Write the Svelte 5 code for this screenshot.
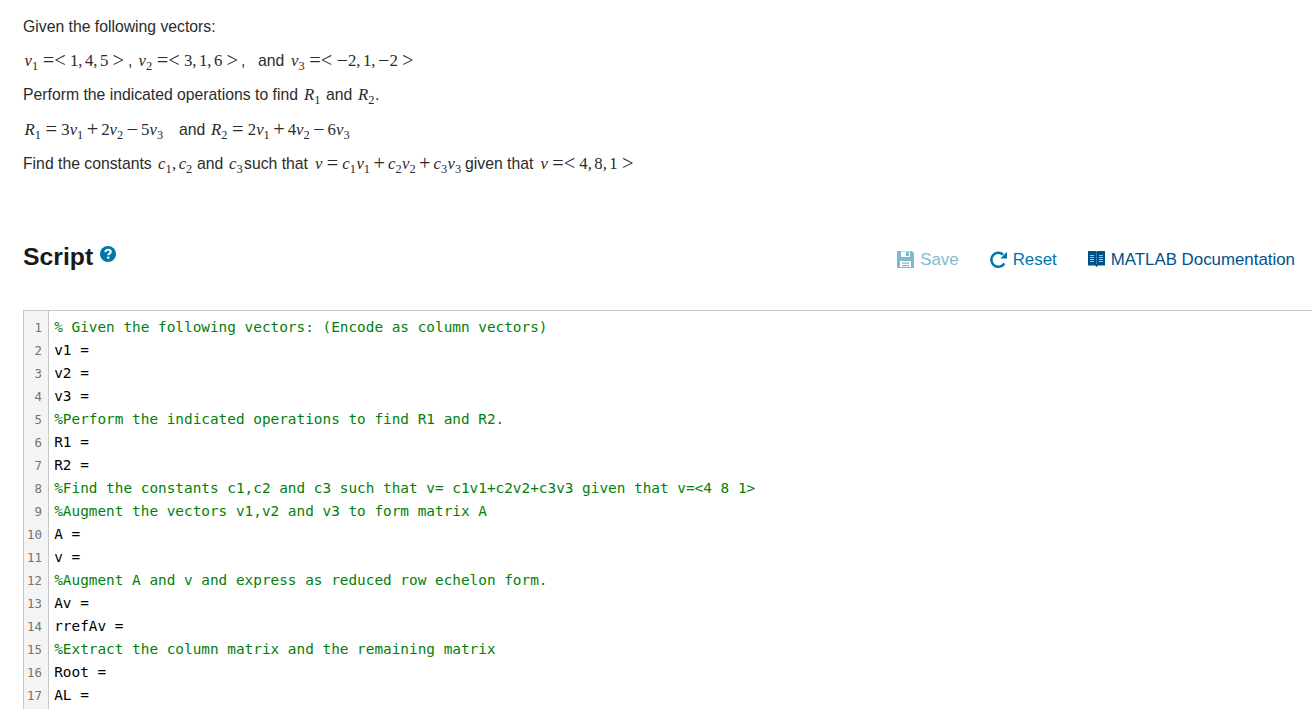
<script>
// each part: start of the part, kind, text
const rows=[
	[[23,"text","Given the following vectors:"]],
	[
		[24.5,"math","v_1=<1,4,5>"],[128,"text",","],
		[138.5,"math","v_2=<3,1,6>"],[241,"text",","],
		[258,"text","and"],[291,"math","v_3=<~2,1,~2>"]
	],
	[
		[23,"text","Perform the indicated operations to find"],[304,"math","R_1"],
		[326,"text","and"],[358,"math","R_2"],[375,"text","."]
	],
	[
		[24.5,"math","R_1=3v_1+2v_2−5v_3"],[179,"text","and"],
		[211,"math","R_2=2v_1+4v_2−6v_3"]
	],
	[
		[23,"text","Find the constants"],[158,"math","c_1,c_2"],
		[197,"text","and"],[229,"math","c_3"],[244,"text","such that"],
		[315,"math","v=c_1v_1+c_2v_2+c_3v_3"],[465,"text","given that"],
		[540.5,"math","v=<4,8,1>"]
	]
]

const lines=[
	"% Given the following vectors: (Encode as column vectors)",
	"v1 =",
	"v2 =",
	"v3 =",
	"%Perform the indicated operations to find R1 and R2.",
	"R1 =",
	"R2 =",
	"%Find the constants c1,c2 and c3 such that v= c1v1+c2v2+c3v3 given that v=<4 8 1>",
	"%Augment the vectors v1,v2 and v3 to form matrix A",
	"A =",
	"v =",
	"%Augment A and v and express as reduced row echelon form.",
	"Av =",
	"rrefAv =",
	"%Extract the column matrix and the remaining matrix",
	"Root =",
	"AL ="
]

function tokens(source){
	return source.match(/_\d|=<|[a-zA-Z]|\d|./g).map(t=>{
		if(t[0]==="_") return { kind:"sub", text:t[1] }
		if(/[a-zA-Z]/.test(t)) return { kind:"var", text:t }
		if(t==="+"||t==="−") return { kind:"bin", text:t }
		if(t==="~") return { kind:"neg", text:"−" }
		if(t===",") return { kind:"comma", text:t }
		if(/\d/.test(t)) return { kind:"num", text:t }
		return { kind:"rel", text:t }
	})
}

function width(row,i){
	return i+1<row.length ? (row[i+1][0]-row[i][0])+"px" : "auto"
}
</script>

<main>
	<section class="problem">
		{#each rows as row}
		<p style:padding-left="{row[0][0]}px">
			{#each row as [x,kind,text], i}
			<span class="part" style:width={width(row,i)}>
				{#if kind==="math"}
				<span class="math">{#each tokens(text) as t}<span class={t.kind}>{t.text}</span>{/each}</span>
				{:else}{text}{/if}
			</span>
			{/each}
		</p>
		{/each}
	</section>

	<header>
		<h2>Script</h2>
		<svg class="help" viewBox="0 0 16 16">
			<circle cx="8" cy="8" r="8" />
			<path d="M5.400 6.100C5.500 4.500 6.600 3.800 8.100 3.800c1.500 0 2.600.8 2.600 2.100 0 1.900-2.400 1.700-2.400 3.400" />
			<rect x="7.1" y="10.6" width="2.3" height="2.1" />
		</svg>
		<nav>
			<a class="save" href="#save">
				<svg viewBox="0 0 17 17">
					<path fill="currentColor" fill-rule="evenodd" d="M0 0h15L17 2v15H0zM4 0v6h9V0zM3 10v6h11v-6z" />
					<path fill="currentColor" d="M4 0h9v.6H4zM9 1h3v4H9zM5 11.500h7v1.200H5zM5 14h7v1.200H5z" />
				</svg>
				Save
			</a>
			<a class="reset" href="#reset">
				<svg viewBox="0 0 17 17">
					<path fill="none" stroke="currentColor" stroke-width="2.5" d="M14.300 12.500A7 7 0 1 1 13.200 3.700" />
					<path fill="currentColor" d="M17 .8v6.700h-6.700z" />
				</svg>
				Reset
			</a>
			<a class="docs" href="#docs">
				<svg viewBox="0 0 17 17">
					<path fill="currentColor" d="M0 0h7.500L8.500.8 9.500 0H17v14.500h-7L8.500 16 7 14.500H0z" />
					<path stroke="#fff" stroke-width="1" opacity=".65" d="M2 4.500h4M2 6.500h4M2 8.500h4M2 10.500h4M11 4.500h4M11 6.500h4M11 8.500h4M11 10.500h4" />
					<path stroke="#fff" stroke-width=".6" opacity=".4" d="M8.500 2v11" />
				</svg>
				MATLAB Documentation
			</a>
		</nav>
	</header>

	<div class="editor">
		{#each lines as line, i}
		<div class="line">
			<span class="number">{i+1}</span>
			<code class:comment={line[0]==="%"}>{line}</code>
		</div>
		{/each}
	</div>
</main>

<style>
	:global(body) {
		background: #fff;
		overflow: hidden;
	}

	main {
		height: 709px;
		overflow: hidden;
		font-family: "Liberation Sans", Arial, sans-serif;
		color: #2b2b2b;
	}

	.problem {
		box-sizing: border-box;
		height: 230px;
		padding-top: 10px;
		font-size: 15.75px;
	}

	p {
		display: flex;
		height: 34px;
		margin: 0;
		line-height: 34px;
		white-space: nowrap;
	}

	p:nth-child(4) { margin-top: 1px }

	.part { flex: none }

	.math {
		display: inline-block;
		font-family: "Liberation Serif", "Times New Roman", serif;
		font-size: 16.8px;
	}

	.var { font-style: italic }

	.sub {
		position: relative;
		top: 4px;
		margin-right: .4px;
		font-size: 12.4px;
		line-height: 0;
	}

	.rel, .bin, .neg {
		position: relative;
		top: 1px;
		font-size: 20.4px;
		line-height: 0;
	}

	.rel { margin: 0 4.2px }
	.bin { margin: 0 3px }
	.comma { margin-right: 2.4px }

	header {
		display: flex;
		box-sizing: border-box;
		height: 80px;
		padding: 0 17px 0 23px;
	}

	h2 {
		margin: 13px 7px 0 0;
		font-size: 24.75px;
		line-height: 28px;
		color: #1a1a1a;
	}

	.help {
		width: 16px;
		height: 16px;
		margin-top: 16px;
		fill: #0076a8;
	}

	.help path {
		fill: none;
		stroke: #fff;
		stroke-width: 2.1;
	}

	.help rect { fill: #fff }

	nav {
		display: flex;
		gap: 31px;
		margin: 20px 0 0 auto;
	}

	a {
		display: flex;
		gap: 6px;
		height: 20px;
		font-size: 16.875px;
		line-height: 20px;
		text-decoration: none;
	}

	a svg {
		width: 17px;
		height: 17px;
		margin-top: 1px;
	}

	.save { color: #7fbad3 }
	.reset { color: #0076a8 }
	.docs { color: #00518a }

	.editor {
		height: 399px;
		margin-left: 23px;
		overflow: hidden;
		border-top: 1px solid #c8c8c8;
		border-left: 1px solid #c8c8c8;
		background: linear-gradient(to right, #f4f4f4 24px, #c8c8c8 24px, #c8c8c8 25px, #fff 25px);
		padding-top: 5px;
	}

	.line {
		display: flex;
		height: 23px;
		line-height: 23px;
		font-family: "DejaVu Sans Mono", Consolas, monospace;
	}

	.number {
		width: 18px;
		margin-right: 12.2px;
		font-size: 12.4px;
		text-align: right;
		color: #737373;
	}

	code {
		font-family: inherit;
		font-size: 14.39px;
		white-space: pre;
		color: #000;
	}

	.comment { color: #028009 }
</style>
